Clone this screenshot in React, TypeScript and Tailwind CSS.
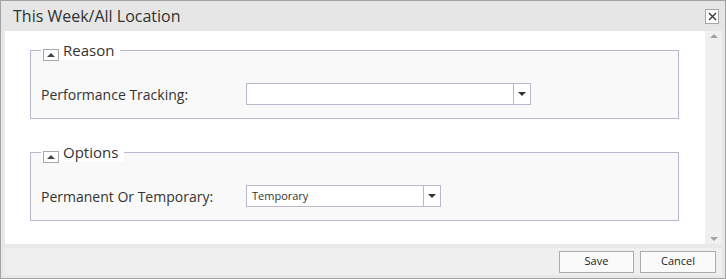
import React from 'react'

const font = { fontFamily: '"Open Sans", "Noto Sans", Arial, sans-serif' }

function Caret({ up = false, className = '' }: { up?: boolean; className?: string }) {
  return (
    <svg width="8" height="4" viewBox="0 0 8 4" className={className}>
      {up ? <polygon points="0,4 8,4 4,0" fill="currentColor" /> : <polygon points="0,0 8,0 4,4" fill="currentColor" />}
    </svg>
  )
}

function Select({ width, value }: { width: string; value?: string }) {
  return (
    <div className={`${width} h-[22px] flex border border-[#b8bacb] bg-white`}>
      <div className="flex-1 flex items-center pl-[5px] text-[11px] text-[#333]">{value}</div>
      <div className="w-[17px] flex items-center justify-center border-l border-[#b8bacb] text-[#333]">
        <Caret />
      </div>
    </div>
  )
}

function Section({ title, label, children }: { title: string; label: string; children: React.ReactNode }) {
  return (
    <fieldset className="border border-[#b6b9cb] bg-[#f9f9f9] px-[10px] pb-[13px]">
      <legend className="h-[20px] flex items-center bg-white px-[2px]">
        <span className="w-[16px] h-[12px] flex items-center justify-center border border-[#a8a8a8] bg-white text-[#444] mt-[9px]">
          <Caret up />
        </span>
        <span className="ml-[4px] pr-[4px] text-[15px] text-[#333] leading-[20px]">{title}</span>
      </legend>
      <div className="flex items-center pt-[23px]">
        <span className="w-[205px] text-[14px] text-[#333]">{label}</span>
        {children}
      </div>
    </fieldset>
  )
}

export default function App() {
  return (
    <div style={font} className="w-[726px] h-[279px] flex flex-col border border-[#a3a3a3] bg-[#e8e8e8]">
      {/* title bar */}
      <div className="h-[30px] flex items-center pl-[12px] pr-[6px] bg-[#e6e6e6]">
        <span className="text-[16px] text-[#333]">This Week/All Location</span>
        <button className="ml-auto w-[14px] h-[15px] flex items-center justify-center border border-[#a5a5a5] bg-white text-[#333]">
          <svg width="9" height="9" viewBox="0 0 9 9">
            <path d="M1 1L8 8M8 1L1 8" stroke="currentColor" strokeWidth="1.3" />
          </svg>
        </button>
      </div>

      {/* body */}
      <div className="h-[213px] ml-[4px] mr-[3px] flex bg-white">
        <div className="flex-1 flex flex-col gap-[23px] pl-[25px] pr-[26px] pt-[9px]">
          <Section title="Reason" label="Performance Tracking:">
            <Select width="w-[285px]" />
          </Section>
          <Section title="Options" label="Permanent Or Temporary:">
            <Select width="w-[195px]" value="Temporary" />
          </Section>
        </div>
        <div className="w-[17px] flex flex-col items-center justify-between py-[3px] bg-[#f0f0f0] text-[#a3a3a3]">
          <Caret up />
          <Caret />
        </div>
      </div>

      {/* footer */}
      <div className="mt-[4px] h-[27px] ml-[4px] mr-[3px] flex items-center justify-end gap-[6px] pr-[6px] bg-[#efefef]">
        <button className="w-[75px] h-[22px] border border-[#acacac] bg-[#fafafa] text-[11px] text-[#222]">Save</button>
        <button className="w-[76px] h-[22px] border border-[#acacac] bg-[#fafafa] text-[11px] text-[#222]">Cancel</button>
      </div>
    </div>
  )
}
